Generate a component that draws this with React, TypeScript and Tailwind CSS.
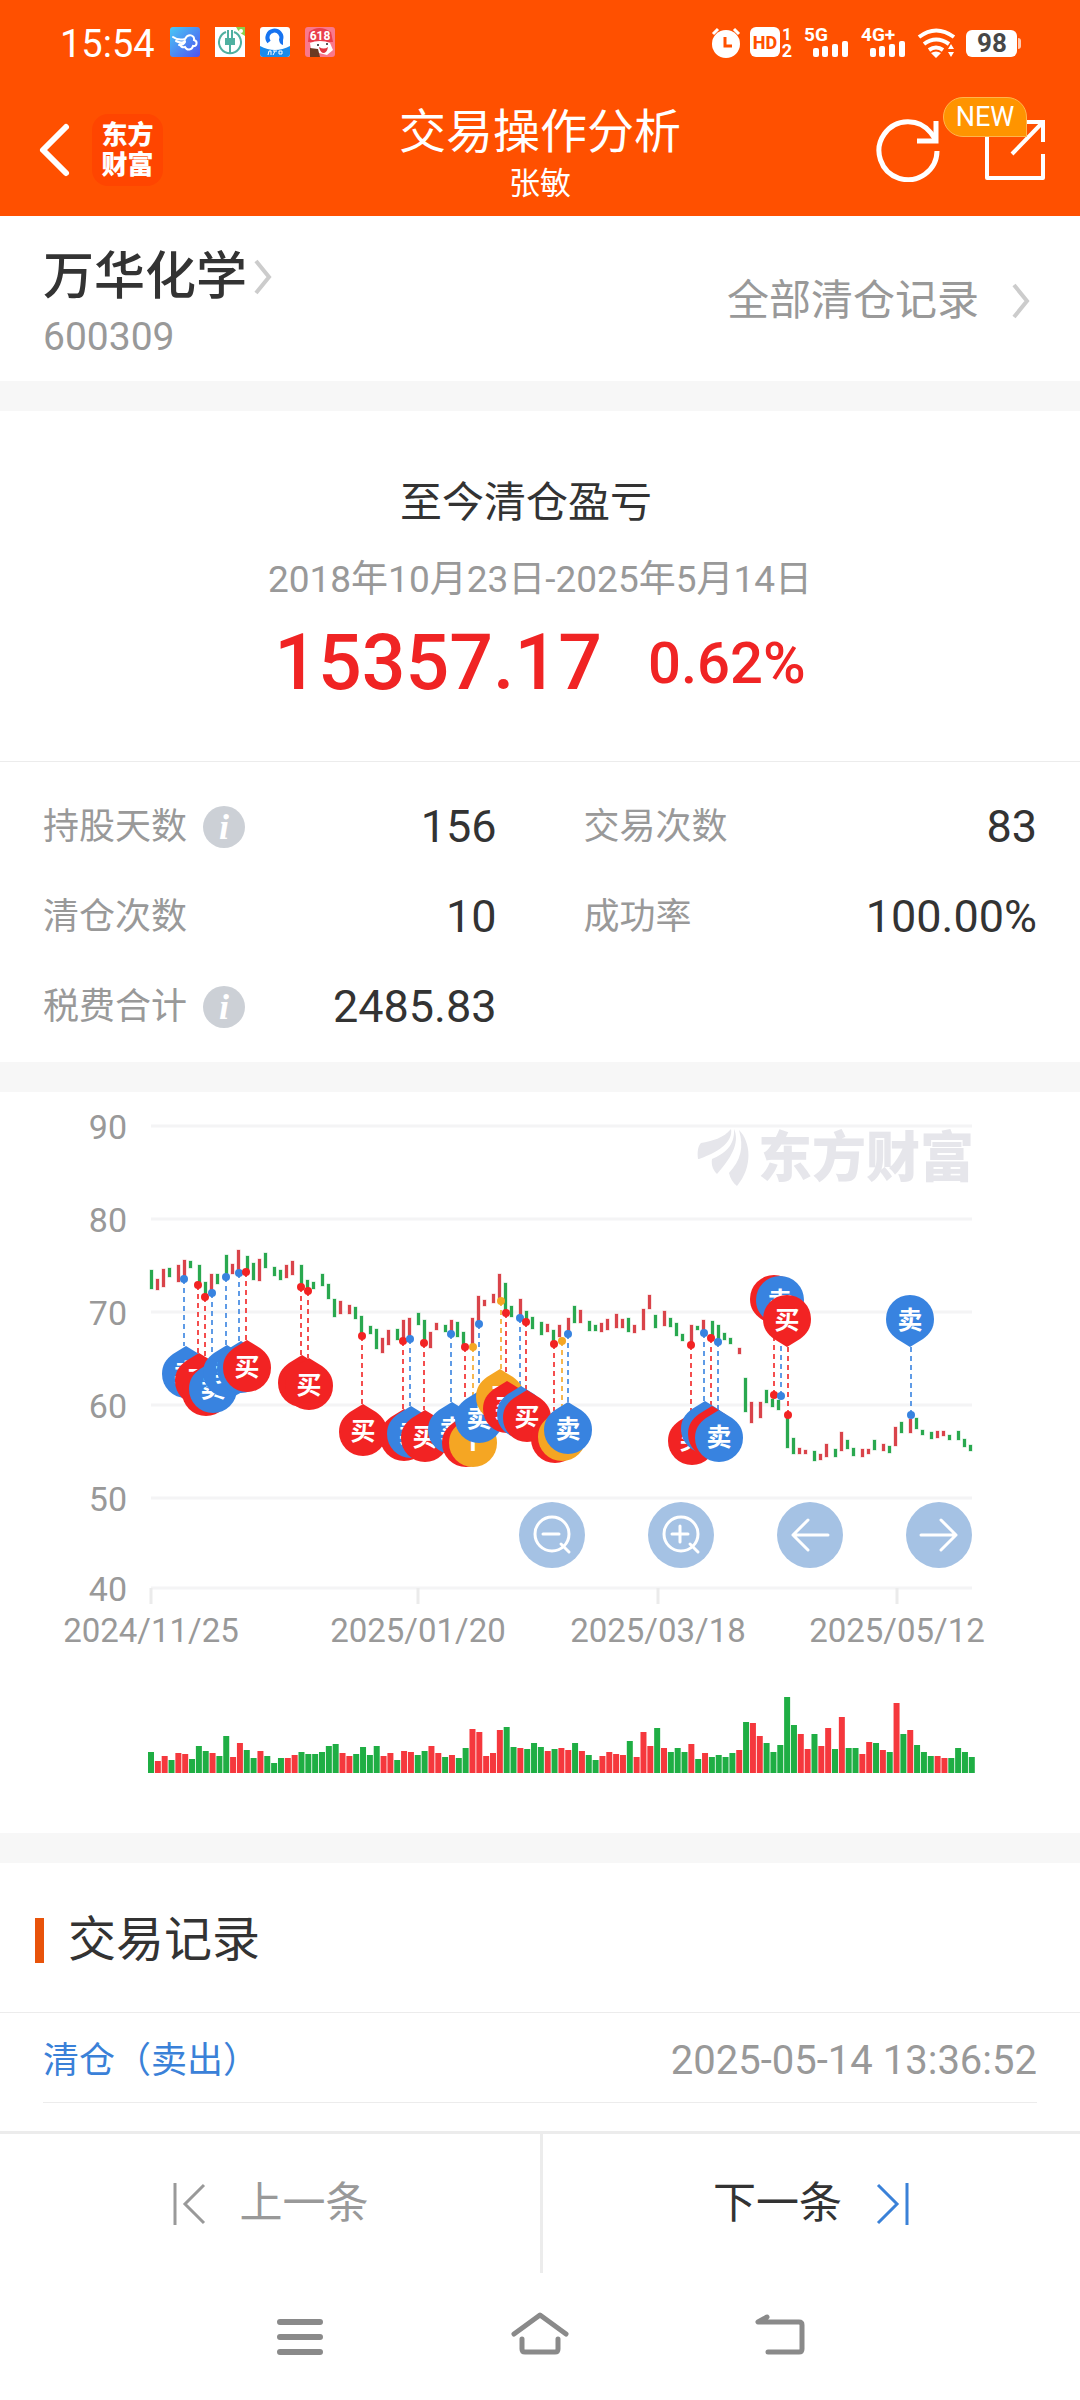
import { useState } from 'react';

type Side = 'buy' | 'sell' | 't';

interface Marker {
  side: Side;
  x: number;
  y: number;
  pinX: number;
  pinY: number;
  above?: boolean;
}

const UP = '#d9444a';
const DOWN = '#2aa84f';

const SIDE_COLOR: Record<Side, string> = { buy: '#f22323', sell: '#3883e0', t: '#f5a623' };
const SIDE_LABEL: Record<Side, string> = { buy: '买', sell: '卖', t: 'T' };

// [up, top, bottom, volume]
const bars: [number, number, number, number][] = [
  [0, 178, 197, 21], [1, 187, 198, 12], [1, 177, 195, 17], [0, 176, 185, 13], [1, 173, 190, 20],
  [1, 168, 186, 19], [0, 169, 176, 14], [0, 173, 191, 27], [0, 190, 205, 22], [1, 182, 199, 20],
  [0, 182, 192, 17], [0, 163, 184, 37], [1, 172, 182, 16], [1, 158, 180, 30], [0, 164, 178, 23],
  [0, 171, 188, 15], [1, 167, 189, 22], [0, 161, 176, 17], [0, 175, 184, 10], [0, 178, 188, 15],
  [1, 173, 186, 15], [1, 169, 183, 18], [0, 173, 193, 21], [0, 188, 197, 19], [0, 190, 197, 19],
  [0, 182, 194, 21], [0, 192, 207, 27], [0, 207, 225, 29], [1, 209, 222, 20], [1, 213, 222, 17],
  [0, 215, 227, 19], [0, 224, 241, 26], [0, 234, 242, 18], [0, 237, 257, 27], [1, 246, 261, 17],
  [1, 238, 253, 20], [0, 237, 248, 13], [1, 228, 246, 22], [1, 226, 244, 21], [0, 221, 233, 18],
  [0, 228, 248, 22], [1, 240, 256, 27], [1, 231, 238, 20], [0, 233, 240, 16], [1, 228, 240, 18],
  [0, 230, 245, 15], [0, 240, 253, 25], [1, 226, 252, 44], [1, 204, 230, 41], [1, 208, 214, 17],
  [1, 202, 211, 20], [1, 182, 206, 43], [0, 191, 218, 46], [0, 214, 225, 26], [1, 207, 223, 25],
  [0, 219, 227, 24], [0, 225, 237, 30], [0, 230, 243, 26], [1, 232, 240, 22], [0, 238, 250, 24],
  [1, 233, 245, 25], [1, 226, 240, 23], [0, 214, 231, 30], [1, 218, 231, 22], [0, 229, 239, 18],
  [0, 233, 239, 13], [1, 231, 240, 17], [1, 227, 238, 21], [1, 222, 236, 19], [1, 227, 236, 18],
  [0, 226, 240, 32], [1, 233, 241, 16], [1, 217, 238, 41], [1, 203, 217, 27], [0, 223, 236, 45],
  [1, 219, 234, 25], [0, 226, 235, 21], [0, 231, 244, 25], [0, 242, 249, 21], [1, 233, 251, 29],
  [0, 234, 238, 14], [1, 228, 238, 20], [0, 229, 243, 16], [0, 233, 247, 18], [0, 241, 248, 16],
  [0, 246, 252, 20], [1, 256, 262, 23], [0, 286, 320, 51], [1, 310, 331, 50], [1, 310, 326, 37],
  [0, 298, 311, 30], [0, 307, 315, 21], [0, 308, 318, 28], [0, 325, 356, 76], [0, 346, 362, 48],
  [1, 356, 362, 39], [1, 358, 362, 24], [0, 359, 369, 39], [1, 362, 368, 27], [1, 352, 365, 45],
  [0, 357, 365, 24], [1, 340, 359, 56], [0, 348, 357, 25], [0, 356, 364, 25], [1, 357, 365, 19],
  [1, 357, 362, 31], [0, 348, 358, 30], [1, 352, 359, 23], [0, 354, 361, 21], [1, 335, 354, 70],
  [0, 330, 341, 39], [1, 327, 341, 43], [0, 326, 337, 28], [0, 338, 343, 21], [0, 340, 347, 17],
  [1, 339, 346, 17], [1, 339, 344, 15], [0, 343, 348, 15], [0, 339, 348, 25], [0, 347, 355, 21],
  [0, 353, 359, 16],
];

const markers: Marker[] = [
  { side: 'sell', x: 184, y: 187, pinX: 186, pinY: 281 },
  { side: 'buy', x: 198, y: 193, pinX: 199, pinY: 288 },
  { side: 'buy', x: 205, y: 205, pinX: 206, pinY: 299 },
  { side: 'sell', x: 212, y: 201, pinX: 213, pinY: 296 },
  { side: 'sell', x: 226, y: 185, pinX: 227, pinY: 280 },
  { side: 'sell', x: 239, y: 181, pinX: 241, pinY: 276 },
  { side: 'buy', x: 246, y: 180, pinX: 247, pinY: 275 },
  { side: 'buy', x: 301, y: 195, pinX: 302, pinY: 290 },
  { side: 'buy', x: 308, y: 199, pinX: 309, pinY: 293 },
  { side: 'buy', x: 362, y: 244, pinX: 363, pinY: 339 },
  { side: 'buy', x: 403, y: 249, pinX: 404, pinY: 344 },
  { side: 'sell', x: 410, y: 247, pinX: 411, pinY: 341 },
  { side: 'buy', x: 424, y: 251, pinX: 425, pinY: 345 },
  { side: 'sell', x: 451, y: 242, pinX: 452, pinY: 337 },
  { side: 'buy', x: 465, y: 255, pinX: 466, pinY: 350 },
  { side: 't', x: 473, y: 255, pinX: 473, pinY: 350 },
  { side: 'sell', x: 479, y: 232, pinX: 479, pinY: 326 },
  { side: 't', x: 501, y: 209, pinX: 500, pinY: 304 },
  { side: 'buy', x: 506, y: 221, pinX: 507, pinY: 316 },
  { side: 'sell', x: 520, y: 226, pinX: 521, pinY: 321 },
  { side: 'buy', x: 526, y: 230, pinX: 527, pinY: 325 },
  { side: 'buy', x: 554, y: 252, pinX: 555, pinY: 346 },
  { side: 't', x: 562, y: 249, pinX: 562, pinY: 344 },
  { side: 'sell', x: 568, y: 242, pinX: 568, pinY: 337 },
  { side: 'buy', x: 691, y: 253, pinX: 692, pinY: 348 },
  { side: 'sell', x: 704, y: 241, pinX: 705, pinY: 336 },
  { side: 'buy', x: 711, y: 246, pinX: 712, pinY: 341 },
  { side: 'sell', x: 718, y: 250, pinX: 719, pinY: 345 },
  { side: 'buy', x: 774, y: 303, pinX: 774, pinY: 208, above: true },
  { side: 'sell', x: 781, y: 304, pinX: 780, pinY: 209, above: true },
  { side: 'buy', x: 788, y: 323, pinX: 787, pinY: 228, above: true },
  { side: 'sell', x: 911, y: 323, pinX: 910, pinY: 228, above: true },
];

const gridLines = [
  { value: 90, y: 34 },
  { value: 80, y: 127 },
  { value: 70, y: 220 },
  { value: 60, y: 313 },
  { value: 50, y: 406 },
  { value: 40, y: 496 },
];

const dateTicks = [
  { label: '2024/11/25', x: 151 },
  { label: '2025/01/20', x: 418 },
  { label: '2025/03/18', x: 658 },
  { label: '2025/05/12', x: 897 },
];

function StatusBar() {
  return (
    <div className="flex h-[84px] items-center justify-between pr-[58px] pl-[60px]">
      <div className="flex items-center gap-[15px]">
        <span className="pt-1 text-[38px] leading-none">15:54</span>
        <svg className="h-[30px] w-[30px]" viewBox="0 0 30 30">
          <defs>
            <linearGradient id="cloud" x1="0" y1="0" x2="1" y2="1">
              <stop offset="0" stopColor="#48c8f5" />
              <stop offset="1" stopColor="#5052f0" />
            </linearGradient>
          </defs>
          <rect width="30" height="30" rx="3" fill="url(#cloud)" />
          <path d="M15 12c3-6 10-4 9 1 4 1 3 7-1 6-1 4-6 5-8 1-3 1-5-1-5-3M3 10c4 3 8 3 12 2M6 14c4 2 7 2 9 0M9 18c3 0 5-1 6-3" fill="none" stroke="#fff" strokeWidth="2" strokeLinecap="round" />
        </svg>
        <svg className="h-[30px] w-[30px]" viewBox="0 0 30 30">
          <rect width="30" height="30" fill="#fff" />
          <path d="M21 0h9v9q-6-3-9-9z" fill="#8bcf4d" />
          <circle cx="26" cy="4" r="2" fill="#fff" />
          <path d="M11 5A11 11 0 1 0 19 5" fill="none" stroke="#4fb0a0" strokeWidth="2" />
          <path d="M13 3v9M17 3v9M15 14v12" fill="none" stroke="#4fb0a0" strokeWidth="2" />
          <path d="M10 11h10v7H10z" fill="#4fb0a0" />
        </svg>
        <svg className="h-[30px] w-[30px]" viewBox="0 0 30 30">
          <rect width="30" height="30" rx="3" fill="#fff" />
          <path d="M0 19q15 8 30 0v8q0 3-3 3H3q-3 0-3-3z" fill="#1a8bea" />
          <path d="M9 15A7 7 0 1 1 21 13" fill="none" stroke="#1673f0" strokeWidth="4" />
          <path d="M19 12h4v6q-4-1-4-6z" fill="#1673f0" />
          <path d="M8 28l1-4h2v4M13 24h4M15 24l-2 4M19 24h3v3h-3z" fill="none" stroke="#fff" />
        </svg>
        <svg className="h-[30px] w-[30px]" viewBox="0 0 30 30">
          <rect width="30" height="30" rx="3" fill="#f9788c" />
          <path d="M4 5q10-8 22 0l2 10H3z" fill="#ea3f4c" />
          <path d="M5 16q4-2 10-2t10 2l3 7-6 5-8-2-8-4z" fill="#fff" />
          <path d="M14 20q5 3 9 0-1 6-5 6-3-1-4-6z" fill="#e0343f" />
          <path d="M5 21l8 1 2 8H5z" fill="#6b3a22" />
          <circle cx="13" cy="18" r="1" fill="#222" />
          <circle cx="22" cy="17" r="1" fill="#222" />
          <text x="15" y="13" textAnchor="middle" fontSize="12" fontWeight="700" fill="#fff">618</text>
        </svg>
      </div>

      <svg className="h-[60px] w-[311px]" viewBox="711 12 311 60" fill="#fff">
        <circle cx="726" cy="44" r="14" />
        <path d="M713 34l5-5M739 34l-5-5" stroke="#fff" strokeWidth="3" />
        <path d="M725 37v9h7" fill="none" stroke="#ff5000" strokeWidth="3" />
        <rect x="750" y="27" width="30" height="30" rx="6" />
        <text x="765" y="49" textAnchor="middle" fontSize="18" fontWeight="800" fill="#ff5000">HD</text>
        <text x="787" y="40" textAnchor="middle" fontSize="17" fontWeight="700">1</text>
        <text x="787" y="57" textAnchor="middle" fontSize="18" fontWeight="700">2</text>
        <text x="804" y="41" fontSize="19" fontWeight="700">5G</text>
        <rect x="813" y="48" width="6" height="9" rx="2" />
        <rect x="822" y="46" width="6" height="11" rx="2" />
        <rect x="832" y="44" width="6" height="13" rx="2" />
        <rect x="842" y="41" width="6" height="16" rx="2" />
        <text x="861" y="41" fontSize="19" fontWeight="700">4G+</text>
        <rect x="870" y="48" width="6" height="9" rx="2" />
        <rect x="879" y="46" width="6" height="11" rx="2" />
        <rect x="889" y="44" width="6" height="13" rx="2" />
        <rect x="899" y="41" width="6" height="16" rx="2" />
        <g fill="none" stroke="#fff" strokeWidth="4">
          <path d="M919 37q17-13 35 0" />
          <path d="M924 44q12-9 25 0" />
          <path d="M929 50q7-5 14 0" />
        </g>
        <path d="M931 53q5-3 10 0l-5 5zM948 49l3-5 3 5zM948 52h6l-3 5z" />
        <rect x="966" y="30" width="51" height="27" rx="6" />
        <path d="M1018 38q3 0 3 3v5q0 3-3 3z" opacity="0.7" />
        <text x="992" y="52" textAnchor="middle" fontSize="26" fontWeight="700" fill="#474747">98</text>
      </svg>
    </div>
  );
}

function TitleBar() {
  return (
    <div className="grid h-[132px] grid-cols-[1fr_auto_1fr] items-center px-[34px]">
      <div className="flex items-center gap-[20px]">
        <button aria-label="返回">
          <svg className="h-[56px] w-[38px]" viewBox="-4 0 38 56" fill="none" stroke="#fff" strokeWidth="6" strokeLinecap="round" strokeLinejoin="round">
            <path d="M28 5L5 28l23 23" />
          </svg>
        </button>
        <div className="flex h-[72px] w-[71px] flex-col items-center justify-center rounded-2xl bg-[#ff4500] text-[26px] leading-[30px] font-black">
          <span>东方</span>
          <span>财富</span>
        </div>
      </div>

      <div className="pt-3 text-center">
        <h1 className="text-[47px] leading-[56px]">交易操作分析</h1>
        <p className="text-[31px] leading-[48px]">张敏</p>
      </div>

      <div className="flex items-center justify-end gap-[44px]">
        <button aria-label="刷新">
          <svg className="h-[64px] w-[64px]" viewBox="0 0 64 64" fill="none" stroke="#fff" strokeWidth="5">
            <path d="M61 33A29 29 0 1 1 55 15L60 22" />
            <path d="M60 3v20H41" />
          </svg>
        </button>
        <button aria-label="分享" className="relative">
          <svg className="h-[64px] w-[62px]" viewBox="0 0 62 64" fill="none" stroke="#fff" strokeWidth="4" strokeLinejoin="round">
            <path d="M22 4H3v56h56V36" />
            <path d="M30 4h29v20M59 4L28 36" strokeLinejoin="miter" />
          </svg>
          <span className="absolute right-[19px] bottom-[45px] flex h-[40px] w-[84px] items-center justify-center rounded-full rounded-br-none border border-[#ffb54d] bg-[#ff9400] text-[27px]">
            NEW
          </span>
        </button>
      </div>
    </div>
  );
}

function Chevron() {
  return (
    <svg className="h-[36px] w-[20px]" viewBox="0 0 20 36" fill="none" stroke="#ccc" strokeWidth="4">
      <path d="M3 2l13 16L3 34" />
    </svg>
  );
}

function Stat({ label, value, info }: { label: string; value: string; info?: boolean }) {
  return (
    <div className="flex h-[90px] items-center justify-between">
      <dt className="flex items-center gap-4 text-[36px] text-[#999]">
        {label}
        {info && (
          <button
            aria-label={`${label}说明`}
            className="flex h-[42px] w-[42px] items-center justify-center rounded-full bg-[#ccd0d6] font-['Liberation_Serif',serif] text-[36px] leading-none font-bold text-white italic"
          >
            i
          </button>
        )}
      </dt>
      <dd className="text-[45px] text-[#333]">{value}</dd>
    </div>
  );
}

function Pin({ marker }: { marker: Marker }) {
  const { side, pinX, pinY, above } = marker;
  return (
    <g>
      <path
        d="M0-27L13-19C20-14 24-8 24 1A24 24 0 0 1-24 1C-24-8-20-14-13-19Z"
        transform={`translate(${pinX} ${pinY}) scale(1 ${above ? -1 : 1})`}
        fill={SIDE_COLOR[side]}
      />
      <text x={pinX} y={pinY + 9} textAnchor="middle" fontSize="25" fontWeight="700" fill="#fff">
        {SIDE_LABEL[side]}
      </text>
    </g>
  );
}

function TradeChart() {
  return (
    <svg className="w-full" viewBox="0 0 1080 741">
      {/* Grid and axes */}
      {gridLines.map((line) => (
        <g key={line.value}>
          <line x1="151" x2="972" y1={line.y} y2={line.y} stroke="#f4f4f5" strokeWidth="3" />
          <text x="127" y={line.y + 13} textAnchor="end" fontSize="34" fill="#999">
            {line.value}
          </text>
        </g>
      ))}
      {dateTicks.map((tick) => (
        <g key={tick.label}>
          <line x1={tick.x} x2={tick.x} y1="496" y2="512" stroke="#ebebeb" strokeWidth="3" />
          <text x={tick.x} y="550" textAnchor="middle" fontSize="33" fill="#999">
            {tick.label}
          </text>
        </g>
      ))}

      {/* Watermark */}
      <g fill="#e6e6eb">
        <path d="M698 67C697 60 698 54 701 51C712 49 724 46 731 37C733 48 722 59 699 67Z" />
        <path d="M734 37C739 48 735 62 717 82C713 78 711 73 712 67C724 62 735 54 734 37Z" />
        <path d="M739 38C751 50 753 75 737 94C733 91 730 86 729 81C741 68 744 55 739 38Z" />
        <text x="974" y="85" textAnchor="end" fontSize="54" fontWeight="900">东方财富</text>
      </g>

      {/* Price and volume bars */}
      {bars.map(([up, top, bottom, volume], i) => {
        const snapped = 151 + Math.floor((i * 6.84 + 0.3) / 3) * 3;
        const color = up ? UP : DOWN;
        return (
          <g key={i}>
            <rect x={snapped - 1} y={top} width="3" height={bottom - top} fill={color} stroke={color} strokeOpacity="0.3" />
            <rect x={148 + i * 6.84} y={681 - volume} width="6" height={volume} fill={up ? '#f5383d' : '#1fae44'} />
          </g>
        );
      })}

      {/* Trade markers */}
      {markers.map((m, i) => (
        <g key={i}>
          <line
            x1={m.x}
            x2={m.x}
            y1={m.y}
            y2={m.above ? m.pinY + 27 : m.pinY - 27}
            stroke={SIDE_COLOR[m.side]}
            strokeWidth="2"
            strokeDasharray="5 4"
            opacity="0.8"
          />
          <circle cx={m.x} cy={m.y} r="4" fill={SIDE_COLOR[m.side]} />
        </g>
      ))}
      {markers.map((m, i) => (
        <Pin key={i} marker={m} />
      ))}
    </svg>
  );
}

const chartControls = [
  { label: '缩小', d: 'M42 42l8 8M24 32h16', lens: true },
  { label: '放大', d: 'M42 42l8 8M24 32h16M32 24v16', lens: true },
  { label: '向左', d: 'M51 33H16M31 18L16 33l15 15', lens: false },
  { label: '向右', d: 'M15 33h35M35 18l15 15-15 15', lens: false },
];

export default function App() {
  const [selected, setSelected] = useState(0);

  return (
    <div className="flex min-h-screen flex-col bg-white font-[Roboto,'Noto_Sans_CJK_SC',sans-serif] text-[#333]">
      <header className="bg-[#ff5000] text-white">
        <StatusBar />
        <TitleBar />
      </header>

      <main>
        {/* Stock */}
        <section className="flex items-center justify-between pr-[49px] pl-[43px]">
          <div className="pt-[31px] pb-[14px]">
            <a href="#stock" className="flex items-center gap-1.5">
              <h2 className="text-[51px] leading-[60px] font-medium">万华化学</h2>
              <Chevron />
            </a>
            <p className="text-[39px] leading-[60px] text-[#999]">600309</p>
          </div>
          <a href="#history" className="flex items-center gap-8 pt-1 text-[42px] leading-[60px] text-[#999]">
            全部清仓记录
            <Chevron />
          </a>
        </section>

        <div className="h-[30px] bg-[#f7f7f7]" />

        {/* Profit */}
        <section className="border-b border-[#ececec] pt-[62px] pb-[53px] text-center">
          <h2 className="pr-7 text-[42px] leading-[60px]">至今清仓盈亏</h2>
          <p className="mt-[22px] text-[37px] leading-[50px] text-[#999]">2018年10月23日-2025年5月14日</p>
          <p className="mt-[13px] flex items-center justify-center gap-[46px] leading-[90px] font-medium text-[#f02424]">
            <span className="text-[77px]">15357.17</span>
            <span className="text-[58px]">0.62%</span>
          </p>
        </section>

        <dl className="grid grid-cols-2 gap-x-[87px] px-[43px] pt-5 pb-2.5">
          <Stat label="持股天数" value="156" info />
          <Stat label="交易次数" value="83" />
          <Stat label="清仓次数" value="10" />
          <Stat label="成功率" value="100.00%" />
          <Stat label="税费合计" value="2485.83" info />
        </dl>

        <div className="h-[30px] bg-[#f7f7f7]" />

        {/* Chart */}
        <section className="relative">
          <TradeChart />
          <div className="absolute top-[410px] right-[108px] flex gap-[63px]">
            {chartControls.map((control) => (
              <button key={control.label} aria-label={control.label} className="rounded-full bg-[#a5c2e4]">
                <svg className="h-[66px] w-[66px]" viewBox="0 0 66 66" fill="none" stroke="#fff" strokeWidth="3" strokeLinecap="round" strokeLinejoin="round">
                  {control.lens && <circle cx="33" cy="32" r="17" />}
                  <path d={control.d} />
                </svg>
              </button>
            ))}
          </div>
        </section>

        <div className="h-[30px] bg-[#f7f7f7]" />

        {/* Records */}
        <section>
          <div className="flex items-center gap-[24px] border-b border-[#ececec] pt-[47px] pb-[42px] pl-[35px]">
            <span className="h-[45px] w-[9px] bg-[#e8530a]" />
            <h2 className="text-[48px] leading-[60px]">交易记录</h2>
          </div>
          <div className="mx-[43px] flex h-[90px] items-center justify-between border-b border-[#ececec] pt-1.5">
            <span className="text-[36px] text-[#3a81d8]">清仓（卖出）</span>
            <time className="text-[40px] text-[#999]">2025-05-14 13:36:52</time>
          </div>
        </section>
      </main>

      <footer className="mt-auto">
        <div className="grid grid-cols-2 border-t-3 border-[#ececec] text-[43px]">
          <button
            className="flex h-[139px] items-center justify-center gap-[34px] text-[#999]"
            onClick={() => setSelected(Math.max(0, selected - 1))}
          >
            <svg className="h-[42px] w-[34px]" viewBox="0 0 34 42" fill="none" stroke="currentColor" strokeWidth="3">
              <path d="M3 0v42M32 2L13 21l19 19" />
            </svg>
            上一条
          </button>
          <button
            className="flex h-[139px] items-center justify-center gap-[34px] border-l-3 border-[#ececec]"
            onClick={() => setSelected(selected + 1)}
          >
            下一条
            <svg className="h-[42px] w-[34px]" viewBox="0 0 34 42" fill="none" stroke="#3a81d8" strokeWidth="3">
              <path d="M31 0v42M2 2l19 19L2 40" />
            </svg>
          </button>
        </div>

        <nav className="flex h-[127px] items-center justify-center gap-[180px]">
          <button aria-label="菜单">
            <svg className="h-[60px] w-[60px]" viewBox="0 0 60 60" fill="none" stroke="#8a8a8a" strokeWidth="6" strokeLinecap="round">
              <path d="M10 15h40M10 30h40M10 45h40" />
            </svg>
          </button>
          <button aria-label="主页">
            <svg className="h-[60px] w-[60px]" viewBox="0 0 60 60" fill="none" stroke="#8a8a8a" strokeWidth="5" strokeLinecap="round" strokeLinejoin="round">
              <path d="M4 27L30 8l26 19M12 32v10q0 3 3 3h30q3 0 3-3V32" />
            </svg>
          </button>
          <button aria-label="后退">
            <svg className="h-[60px] w-[60px]" viewBox="0 0 60 60" fill="none" stroke="#8a8a8a" strokeWidth="5" strokeLinecap="round" strokeLinejoin="round">
              <path d="M17 10L8 15h41q3 0 3 3v24q0 3-3 3H18" />
            </svg>
          </button>
        </nav>
      </footer>
    </div>
  );
}
